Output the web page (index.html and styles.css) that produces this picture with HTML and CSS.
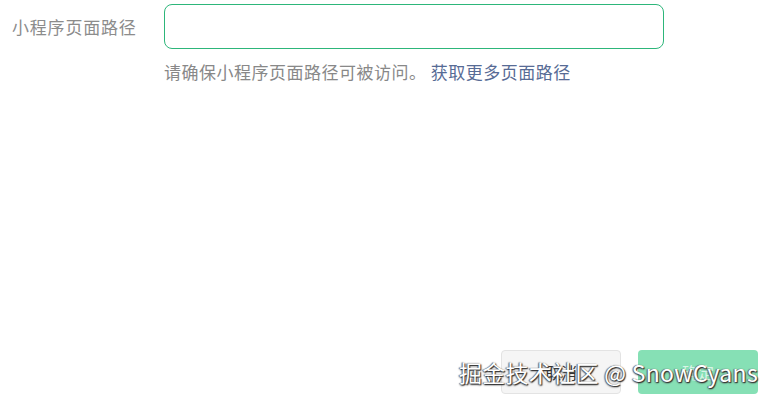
FILE: index.html
```html
<!DOCTYPE html>
<html lang="zh">
<head>
<meta charset="utf-8">
<link rel="stylesheet" href="styles.css">
</head>
<body>
<div class="page">
  <div class="form-row">
    <label class="label">小程序页面路径</label>
    <div class="field">
      <input class="input" type="text">
      <div class="help">请确保小程序页面路径可被访问。 <a class="link">获取更多页面路径</a></div>
    </div>
  </div>
  <div class="spacer"></div>
  <div class="actions">
    <button class="btn btn-cancel">取消</button>
    <button class="btn btn-ok">确定</button>
  </div>
  <div class="watermark">掘金技术社区 @ SnowCyans</div>
</div>
</body>
</html>
```
FILE: styles.css
```css
* { box-sizing: border-box; }
html, body { margin: 0; padding: 0; background: #fff; }
body {
  font-family: "Noto Sans CJK SC", "Noto Sans", sans-serif;
  width: 772px;
  height: 399px;
  overflow: hidden;
}
.page {
  position: relative;
  height: 399px;
  display: flex;
  flex-direction: column;
}
.form-row {
  display: flex;
  align-items: flex-start;
  padding-top: 4px;
}
.label {
  width: 164px;
  padding-left: 12px;
  font-size: 17px;
  line-height: 45px;
  color: #8c8c8c;
  letter-spacing: 0.8px;
}
.field { display: flex; flex-direction: column; }
.input {
  width: 500px;
  height: 45px;
  border: 1px solid #2db67a;
  border-radius: 8px;
  outline: none;
  background: #fff;
  margin: 0;
}
.help {
  margin-top: 11px;
  font-size: 17px;
  line-height: 24px;
  color: #888;
  letter-spacing: 0.5px;
  white-space: nowrap;
}
.link { color: #576b95; }
.spacer { flex: 1; }
.actions {
  display: flex;
  justify-content: flex-end;
  gap: 17px;
  padding: 0 14px 5px 0;
}
.btn {
  width: 120px;
  height: 44px;
  border-radius: 4px;
  font-family: "Noto Sans CJK SC", sans-serif;
  font-size: 16px;
  margin: 0;
}
.btn-cancel {
  background: #f5f5f5;
  border: 1px solid #e3e3e3;
  color: #333;
}
.btn-ok {
  background: #86e0b5;
  border: none;
  color: #d8f5e7;
}
.watermark {
  position: absolute;
  right: 14px;
  bottom: 12px;
  font-family: "Noto Sans CJK SC", "Liberation Sans", sans-serif;
  font-size: 23px;
  line-height: 30px;
  letter-spacing: 0.3px;
  color: #fff;
  text-shadow: 1px 1px 1px #333, -1px 0 1px #666, 0 1px 2px #444;
  white-space: nowrap;
}
```
